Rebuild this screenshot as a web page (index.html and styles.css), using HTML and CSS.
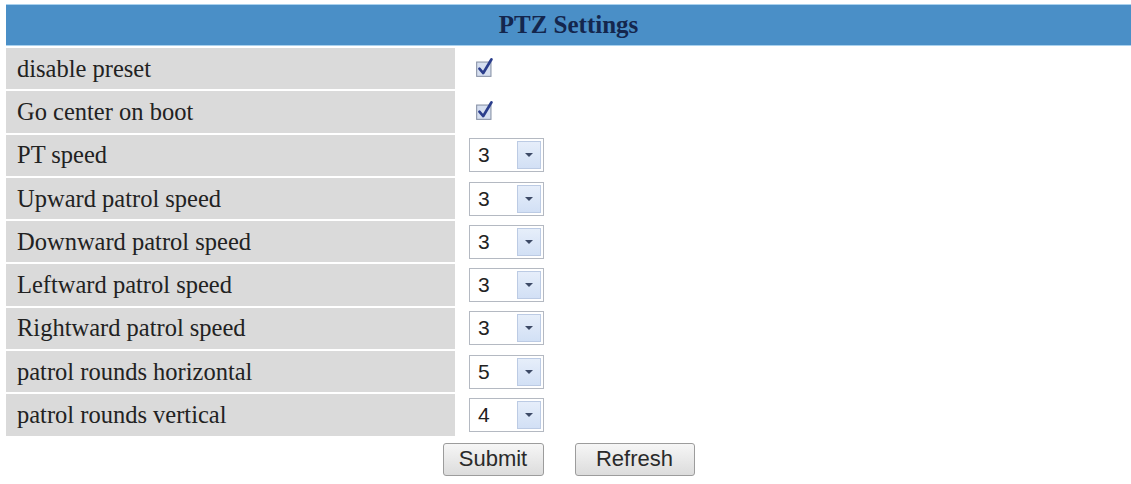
FILE: index.html
```html
<!DOCTYPE html>
<html>
<head>
<meta charset="utf-8">
<title>PTZ Settings</title>
<link rel="stylesheet" href="styles.css">
</head>
<body>
<div class="panel">
  <div class="head">PTZ Settings</div>
  <div class="rows">
    <div class="row"><div class="label">disable preset</div><div class="value"><span class="check"><svg viewBox="0 0 20 20" width="22" height="22"><rect x="1.5" y="5.5" width="13" height="13" fill="#d6dff0" stroke="#8a94a8"/><path d="M4 11.5 L7.5 15.5 L15 3" fill="none" stroke="#2b3e8c" stroke-width="2.4" stroke-linecap="round" stroke-linejoin="round"/></svg></span></div></div>
    <div class="row"><div class="label">Go center on boot</div><div class="value"><span class="check"><svg viewBox="0 0 20 20" width="22" height="22"><rect x="1.5" y="5.5" width="13" height="13" fill="#d6dff0" stroke="#8a94a8"/><path d="M4 11.5 L7.5 15.5 L15 3" fill="none" stroke="#2b3e8c" stroke-width="2.4" stroke-linecap="round" stroke-linejoin="round"/></svg></span></div></div>
    <div class="row"><div class="label">PT speed</div><div class="value"><span class="select"><span class="sel-text">3</span><span class="sel-btn"><span class="tri"></span></span></span></div></div>
    <div class="row"><div class="label">Upward patrol speed</div><div class="value"><span class="select"><span class="sel-text">3</span><span class="sel-btn"><span class="tri"></span></span></span></div></div>
    <div class="row"><div class="label">Downward patrol speed</div><div class="value"><span class="select"><span class="sel-text">3</span><span class="sel-btn"><span class="tri"></span></span></span></div></div>
    <div class="row"><div class="label">Leftward patrol speed</div><div class="value"><span class="select"><span class="sel-text">3</span><span class="sel-btn"><span class="tri"></span></span></span></div></div>
    <div class="row"><div class="label">Rightward patrol speed</div><div class="value"><span class="select"><span class="sel-text">3</span><span class="sel-btn"><span class="tri"></span></span></span></div></div>
    <div class="row"><div class="label">patrol rounds horizontal</div><div class="value"><span class="select"><span class="sel-text">5</span><span class="sel-btn"><span class="tri"></span></span></span></div></div>
    <div class="row"><div class="label">patrol rounds vertical</div><div class="value"><span class="select"><span class="sel-text">4</span><span class="sel-btn"><span class="tri"></span></span></span></div></div>
  </div>
  <div class="actions">
    <button class="btn btn-submit">Submit</button>
    <button class="btn btn-refresh">Refresh</button>
  </div>
</div>
</body>
</html>
```
FILE: styles.css
```css
html, body {
  margin: 0;
  padding: 0;
  background: #ffffff;
}
body {
  padding: 4px 0 0 6px;
  font-family: "Liberation Serif", "Times New Roman", serif;
}
.panel {
  width: 1125px;
}
.head {
  height: 42px;
  box-sizing: border-box;
  border-top: 1px solid #a9d1ee;
  border-bottom: 1px solid #a9d1ee;
  background: #4a8fc7;
  color: #14264d;
  font-weight: bold;
  font-size: 25px;
  line-height: 40px;
  text-align: center;
}
.rows {
  display: flex;
  flex-direction: column;
  gap: 2px;
  padding-top: 2px;
}
.row {
  display: grid;
  grid-template-columns: 449px 1fr;
  height: 41.3px;
}
.label {
  background: #dadada;
  color: #222;
  font-size: 24.5px;
  padding-left: 11px;
  display: flex;
  align-items: center;
}
.value {
  display: flex;
  align-items: center;
  padding-left: 14px;
}
.check {
  display: block;
  width: 22px;
  height: 22px;
  margin-left: 6px;
  margin-top: -4px;
}
.check svg {
  display: block;
}
.select {
  display: flex;
  width: 75px;
  height: 34px;
  box-sizing: border-box;
  border: 1px solid #b4b9c2;
  background: #fff;
  font-family: "Liberation Sans", Arial, sans-serif;
  font-size: 21px;
  color: #222;
  padding: 2px;
}
.sel-text {
  flex: 1;
  display: flex;
  align-items: center;
  padding-left: 6px;
}
.sel-btn {
  width: 24px;
  box-sizing: border-box;
  border: 1px solid #bccbe4;
  background: linear-gradient(#e6eefa, #d2e0f5);
  display: flex;
  align-items: center;
  justify-content: center;
}
.tri {
  width: 0;
  height: 0;
  border-left: 4px solid transparent;
  border-right: 4px solid transparent;
  border-top: 4px solid #3d4a66;
}
.actions {
  display: flex;
  justify-content: center;
  gap: 31px;
  padding-top: 7px;
}
.btn {
  height: 33px;
  box-sizing: border-box;
  border: 1px solid #9c9c9c;
  border-radius: 3px;
  background: linear-gradient(#f6f6f6, #dcdcdc);
  font-family: "Liberation Sans", Arial, sans-serif;
  font-size: 22px;
  color: #2a2a2a;
  padding: 0;
}
.btn-submit { width: 101px; }
.btn-refresh { width: 120px; }
```
